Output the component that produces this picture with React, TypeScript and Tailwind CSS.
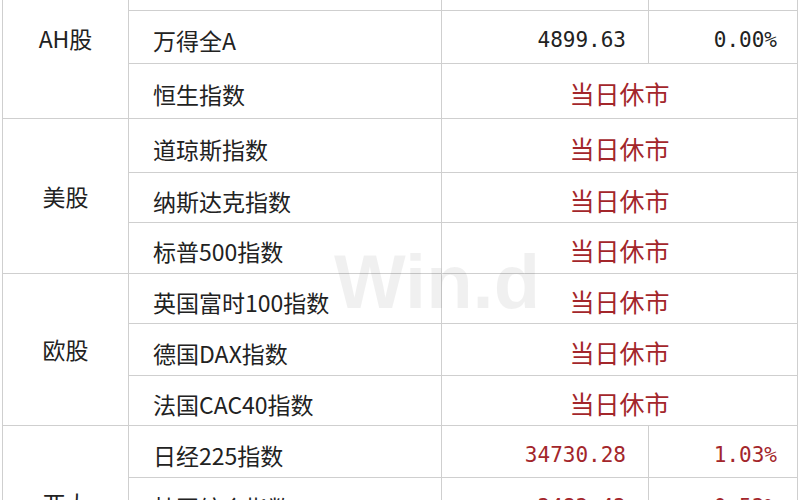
import React from "react";

// ── table data ─────────────────────────────────────────────
type Row = {
  name: string;
  h: number;
  value?: string;
  pct?: string;
  closed?: boolean;
  red?: boolean;
};

type Group = { label: string; rows: Row[] };

// first row lies above the crop, only its bottom border shows
const GROUPS: Group[] = [
  {
    label: "AH股",
    rows: [
      { name: "", h: 52, value: "", pct: "" },
      { name: "万得全A", h: 53, value: "4899.63", pct: "0.00%" },
      { name: "恒生指数", h: 55, closed: true },
    ],
  },
  {
    label: "美股",
    rows: [
      { name: "道琼斯指数", h: 54, closed: true },
      { name: "纳斯达克指数", h: 50, closed: true },
      { name: "标普500指数", h: 51, closed: true },
    ],
  },
  {
    label: "欧股",
    rows: [
      { name: "英国富时100指数", h: 50, closed: true },
      { name: "德国DAX指数", h: 52, closed: true },
      { name: "法国CAC40指数", h: 50, closed: true },
    ],
  },
  {
    label: "亚太",
    rows: [
      { name: "日经225指数", h: 52, value: "34730.28", pct: "1.03%", red: true },
      { name: "韩国综合指数", h: 52, value: "2483.42", pct: "0.53%", red: true },
      { name: "澳洲标普200指数", h: 52, value: "7650.10", pct: "0.40%", red: true },
    ],
  },
];

const cjk = { fontFamily: '"Noto Sans CJK SC", "Noto Sans", sans-serif' };
const mono = { fontFamily: '"DejaVu Sans Mono", "Liberation Mono", monospace' };

export default function App() {
  return (
    <div className="relative w-[800px] h-[500px] overflow-hidden bg-white">
      <table
        className="ml-[2px] -mt-[42px] w-[795px] table-fixed border-collapse text-[23px] text-[#222]"
        style={cjk}
      >
        <colgroup>
          <col className="w-[126px]" />
          <col className="w-[313px]" />
          <col className="w-[207px]" />
          <col className="w-[149px]" />
        </colgroup>
        <tbody>
          {GROUPS.map((g) =>
            g.rows.map((r, i) => (
              <tr key={g.label + i} style={{ height: r.h }}>
                {i === 0 && (
                  <td
                    rowSpan={g.rows.length}
                    className="border border-[#cfcfcf] text-center align-middle"
                  >
                    {g.label}
                  </td>
                )}
                <td className="border border-[#cfcfcf] pl-[24px] pt-[7px] align-middle leading-none">
                  {r.name}
                </td>
                {r.closed ? (
                  <td
                    colSpan={2}
                    className="border border-[#cfcfcf] pt-[5px] text-center align-middle text-[25px] leading-none text-[#a3262b]"
                  >
                    当日休市
                  </td>
                ) : (
                  <>
                    <td
                      className={`border border-[#cfcfcf] pr-[22px] pt-[7px] text-right align-middle text-[21px] leading-none ${
                        r.red ? "text-[#a3262b]" : "text-[#222]"
                      }`}
                      style={mono}
                    >
                      {r.value}
                    </td>
                    <td
                      className={`border border-[#cfcfcf] pr-[20px] pt-[7px] text-right align-middle text-[21px] leading-none ${
                        r.red ? "text-[#a3262b]" : "text-[#222]"
                      }`}
                      style={mono}
                    >
                      {r.pct}
                    </td>
                  </>
                )}
              </tr>
            ))
          )}
        </tbody>
      </table>

      {/* ── watermark ─────────────────────────────────────── */}
      <div
        className="pointer-events-none absolute left-[334px] top-[244px] text-[76px] font-bold leading-none text-black/[0.06]"
        style={{ fontFamily: '"Liberation Sans", Arial, sans-serif' }}
      >
        Win.d
      </div>
    </div>
  );
}
